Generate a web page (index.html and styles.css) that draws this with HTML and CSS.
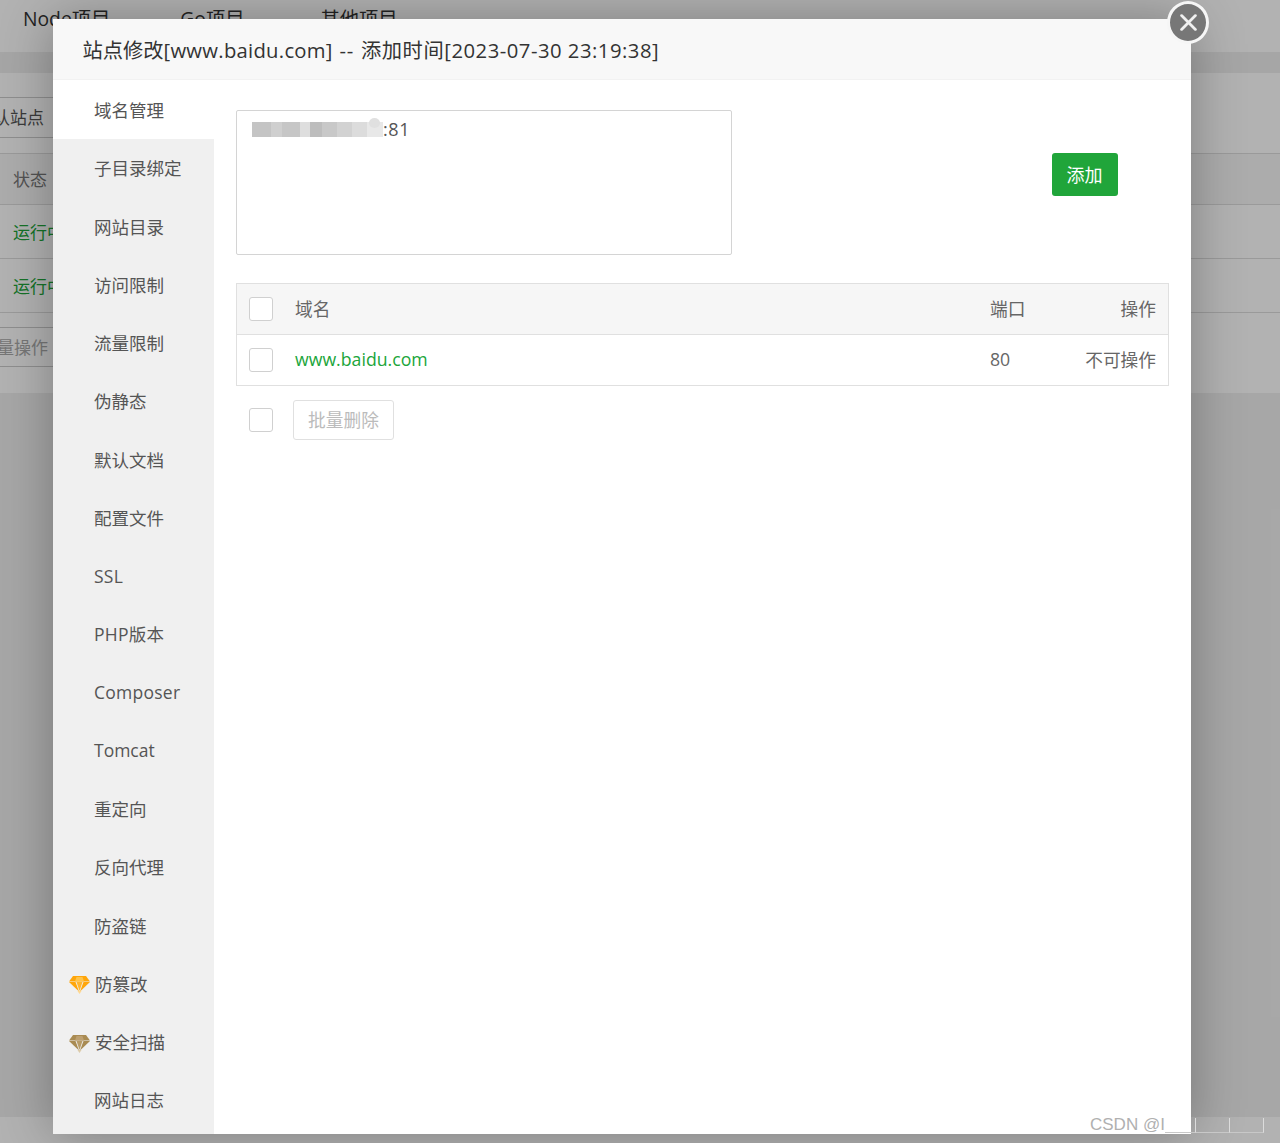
FILE: index.html
```html
<!DOCTYPE html>
<html lang="zh-CN">
<head>
<meta charset="utf-8">
<title>站点修改</title>
<link rel="stylesheet" href="styles.css">
</head>
<body>
<div class="page">
  <div class="topnav"><span class="tab tab-node">Node项目</span><span class="tab tab-go">Go项目</span><span class="tab">其他项目</span></div>
  <div class="band"></div>
  <div class="panel">
    <div class="toolbar"><span class="page-btn">默认站点</span></div>
    <div class="row row-head"><span class="cell-muted">状态</span></div>
    <div class="row row-a"><span class="cell-green">运行中</span></div>
    <div class="row row-b"><span class="cell-green">运行中</span></div>
    <div class="row-batch"><span class="page-btn batch">批量操作</span></div>
  </div>
  <div class="page-rest"></div>
  <div class="page-foot"></div>
</div>
<div class="shade"></div>

<section class="modal">
  <header class="modal-title">站点修改<span class="title-site">[www.baidu.com]</span> <span class="title-dash">--</span> <span class="title-added">添加时间</span><span class="title-time">[2023-07-30 23:19:38]</span></header>
  <div class="modal-body">
    <nav class="side">
      <a class="side-item active">域名管理</a>
      <a class="side-item">子目录绑定</a>
      <a class="side-item">网站目录</a>
      <a class="side-item">访问限制</a>
      <a class="side-item">流量限制</a>
      <a class="side-item">伪静态</a>
      <a class="side-item">默认文档</a>
      <a class="side-item">配置文件</a>
      <a class="side-item side-latin">SSL</a>
      <a class="side-item side-latin">PHP版本</a>
      <a class="side-item side-latin">Composer</a>
      <a class="side-item">Tomcat</a>
      <a class="side-item">重定向</a>
      <a class="side-item">反向代理</a>
      <a class="side-item">防盗链</a>
      <a class="side-item gem-item"><svg class="gem" viewBox="0 0 21 18"><path fill="#ffa60a" d="M4 0h13l4 5.500H0z"/><path fill="#ffc44a" d="M7.500 1h6l1.500 4.500H6z"/><path fill="#ffa60a" d="M0 6h6.500l3.500 9.500z"/><path fill="#ffb52e" d="M7.500 6h6L10.500 15z"/><path fill="#ffa60a" d="M14.500 6H21l-10 9.500z"/><path fill="#ffd890" d="M8.500 15h4l-2 3z"/></svg>防篡改</a>
      <a class="side-item gem-item"><svg class="gem" viewBox="0 0 21 18"><path fill="#a98b52" d="M4 0h13l4 5.500H0z"/><path fill="#bda070" d="M7.500 1h6l1.500 4.500H6z"/><path fill="#a98b52" d="M0 6h6.500l3.500 9.500z"/><path fill="#b89c68" d="M7.500 6h6L10.500 15z"/><path fill="#a98b52" d="M14.500 6H21l-10 9.500z"/><path fill="#dccbaa" d="M8.500 15h4l-2 3z"/></svg>安全扫描</a>
      <a class="side-item">网站日志</a>
    </nav>
    <main class="content">
      <div class="add-row">
        <div class="domain-input">
          <span class="domain-text"><span class="blur"></span><span class="port">:81</span></span>
        </div>
        <button class="btn-add">添加</button>
      </div>
      <div class="table">
        <div class="tr th">
          <span class="check"></span>
          <span class="td-name">域名</span>
          <span class="td-port">端口</span>
          <span class="td-op">操作</span>
        </div>
        <div class="tr">
          <span class="check"></span>
          <span class="td-name link">www.baidu.com</span>
          <span class="td-port">80</span>
          <span class="td-op">不可操作</span>
        </div>
      </div>
      <div class="batch-row">
        <span class="check"></span>
        <button class="btn-batch">批量删除</button>
      </div>
    </main>
  </div>
</section>
<button class="close" aria-label="关闭"><svg viewBox="0 0 16 16"><path d="M1.500 1.500l13 13M14.500 1.500l-13 13"/></svg></button>
<div class="watermark">CSDN @I<span class="wm-lines"><i></i><i></i><i></i></span></div>
</body>
</html>
```
FILE: styles.css
```css
* { box-sizing: border-box; }
html, body { margin: 0; padding: 0; }
body {
  width: 1280px;
  height: 1143px;
  overflow: hidden;
  position: relative;
  font-family: "Open Sans", "Noto Sans CJK SC", sans-serif;
  color: #555;
}
.page {
  height: 1143px;
  display: flex;
  flex-direction: column;
  background: #f0f0f0;
}
.topnav {
  height: 52px;
  background: #fff;
  display: flex;
  padding: 7px 0 0 23px;
  font-size: 19.300px;
  color: #333;
  line-height: 24px;
}
.tab { margin-right: 76px; }
.tab-node { margin-right: 70px; }
.band { height: 21px; background: #eee; }
.panel { height: 320px; background: #fff; font-size: 17px; }
.toolbar { height: 80px; padding-top: 24px; overflow: hidden; }
.page-btn {
  display: block;
  width: 90px;
  height: 41px;
  margin-left: -24px;
  border: 1px solid #ccc;
  border-left: 0;
  line-height: 39px;
  color: #555;
  white-space: nowrap;
}
.row { border-bottom: 1px solid #ddd; padding-left: 13px; line-height: 24px; }
.row-head { height: 52px; padding-top: 14px; color: #777; background: #f6f6f6; border-top: 1px solid #ddd; }
.row-a { height: 54px; padding-top: 16px; }
.row-b { height: 54px; padding-top: 16px; }
.row-batch { height: 80px; padding-top: 14px; overflow: hidden; }
.page-btn.batch { margin-left: -20px; height: 40px; line-height: 40px; color: #aaa; }
.cell-green { color: #20a53a; }
.page-rest { flex: 1; background: #f0f0f0; }
.page-foot { height: 26px; background: #fff; }
.shade {
  position: absolute;
  inset: 0;
  background: rgba(0,0,0,.3);
}
.modal {
  position: absolute;
  left: 53px;
  top: 19px;
  width: 1138px;
  height: 1115px;
  background: #fff;
  display: flex;
  flex-direction: column;
  box-shadow: 0 0 50px rgba(0,0,0,.3);
}
.modal-title {
  height: 61px;
  flex: none;
  background: #f8f8f8;
  padding-left: 29.500px;
  font-size: 20.250px;
  line-height: 63px;
  color: #333;
  border-bottom: 1px solid #f2f2f2;
  white-space: nowrap;
}
.title-site { letter-spacing: .27px; }
.title-dash { letter-spacing: .8px; margin: 0 1.500px; }
.title-added { letter-spacing: .6px; }
.title-time { letter-spacing: .5px; }
.modal-body { flex: 1; display: flex; min-height: 0; }
.side {
  width: 161px;
  flex: none;
  background: #f0f0f0;
  display: flex;
  flex-direction: column;
  overflow: hidden;
}
.side-item {
  height: 58.250px;
  flex: none;
  padding: 1px 0 0 41px;
  font-size: 17.500px;
  color: #555;
  white-space: nowrap;
  display: flex;
  align-items: center;
}
.side-item.active { background: #fff; box-shadow: 0 1px 0 #fff; }
.side-latin { letter-spacing: .25px; }
.gem-item { padding-left: 16px; }
.gem { width: 21px; height: 18px; margin: 4px 5px 0 0; flex: none; }
.content { flex: 1; padding: 30px 22px 0 22px; min-width: 0; }
.add-row { display: flex; height: 145px; align-items: flex-start; }
.domain-input {
  width: 496px;
  height: 145px;
  border: 1px solid #d4d4d4;
  border-radius: 2px;
  padding: 6px 12px;
  font-size: 18px;
  line-height: 24px;
  color: #555;
}
.domain-text { display: flex; align-items: center; }
.port { letter-spacing: .6px; }
.blur {
  position: relative;
  width: 131px;
  height: 15px;
  margin: 0 0 0 3px;
  background: linear-gradient(90deg,
    #c4c4c4 0 19px, #cfcfcf 19px 30px, #c6c6c6 30px 48px, #dedede 48px 58px, #bdbdbd 58px 70px,
    #c8c8c8 70px 85px, #d2d2d2 85px 100px, #dcdcdc 100px 115px, #e8e8e8 115px 131px);
}
.blur::after {
  content: "";
  position: absolute;
  left: 117px;
  top: -4px;
  width: 11px;
  height: 10px;
  border-radius: 50%;
  background: #e0e0e0;
}
.btn-add {
  margin: 43px 0 0 320px;
  width: 66px;
  height: 43px;
  background: #20a53a;
  border: 0;
  border-radius: 3px;
  color: #fff;
  font: 18px/43px "Open Sans", "Noto Sans CJK SC", sans-serif;
  padding: 1px 1px 0 0;
}
.table {
  margin-top: 28px;
  width: 933px;
  border: 1px solid #e0e0e0;
  font-size: 17.700px;
  color: #666;
}
.tr {
  height: 50px;
  display: flex;
  align-items: center;
  padding: 0 12px 2px 12px;
}
.th { height: 51px; background: #f6f6f6; border-bottom: 1px solid #e0e0e0; }
.check {
  width: 24px;
  height: 24px;
  flex: none;
  background: #fff;
  border: 1px solid #d0d0d0;
  border-radius: 3px;
}
.tr .check { margin-top: 2px; }
.td-name { margin-left: 22px; flex: 1; }
.td-port { width: 96px; }
.td-op { width: 70px; display: flex; justify-content: flex-end; white-space: nowrap; }
.link { color: #20a53a; }
.batch-row { display: flex; align-items: center; margin-top: 14px; padding-left: 13px; }
.btn-batch {
  margin-left: 20px;
  width: 101px;
  height: 40px;
  background: #fff;
  border: 1px solid #e0e0e0;
  border-radius: 3px;
  color: #bbb;
  font: 17.700px/38px "Open Sans", "Noto Sans CJK SC", sans-serif;
  padding: 0;
}
.close {
  position: absolute;
  left: 1167px;
  top: 1px;
  width: 42px;
  height: 43px;
  border-radius: 50%;
  background: #777;
  border: 3px solid #f6f6f6;
  padding: 0;
  display: flex;
  align-items: center;
  justify-content: center;
}
.close svg { width: 17px; height: 17px; fill: none; stroke: #f0f0f0; stroke-width: 2.600; stroke-linecap: round; }
.watermark {
  position: absolute;
  left: 1090px;
  top: 1114px;
  font: 17px/22px "Liberation Sans", sans-serif;
  color: #b0b0b0;
  display: flex;
  white-space: nowrap;
}
.wm-lines { display: flex; }
.wm-lines i { width: 34px; height: 15px; margin-top: 4px; border-right: 1px solid #dcdcdc; border-bottom: 1px solid #c8c8c8; }
.wm-lines i:first-child { width: 31px; }
```
